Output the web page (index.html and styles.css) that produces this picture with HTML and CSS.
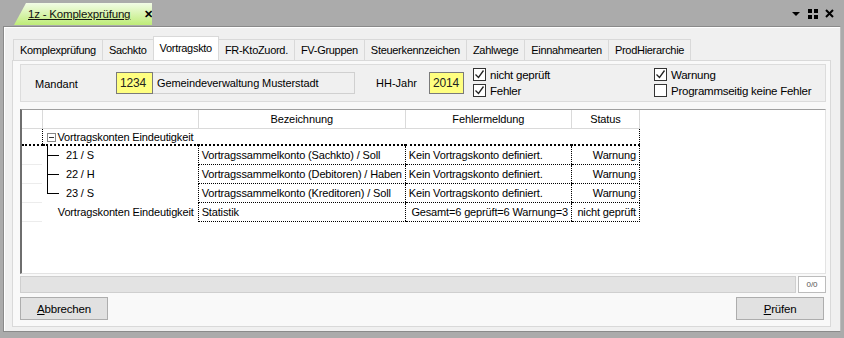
FILE: index.html
```html
<!DOCTYPE html>
<html lang="de">
<head>
<meta charset="utf-8">
<link rel="stylesheet" href="styles.css">
</head>
<body>
<div class="topbar">
  <div class="doctab"><span class="doctitle">1z - Komplexprüfung</span><span class="docclose">✕</span></div>
  <div class="topicons">
    <svg width="10" height="6" viewBox="0 0 10 6"><path d="M1 1h8L5 5z" fill="#000"/></svg>
    <svg width="10" height="10" viewBox="0 0 10 10"><rect x="0" y="0" width="4" height="4"/><rect x="6" y="0" width="4" height="4"/><rect x="0" y="6" width="4" height="4"/><rect x="6" y="6" width="4" height="4"/></svg>
    <svg width="9" height="9" viewBox="0 0 9 9"><path d="M1 1l7 7M8 1l-7 7" stroke="#000" stroke-width="2"/></svg>
  </div>
</div>
<div class="window">
  <div class="tabs">
    <div class="tab">Komplexprüfung</div>
    <div class="tab">Sachkto</div>
    <div class="tab active">Vortragskto</div>
    <div class="tab">FR-KtoZuord.</div>
    <div class="tab">FV-Gruppen</div>
    <div class="tab">Steuerkennzeichen</div>
    <div class="tab">Zahlwege</div>
    <div class="tab">Einnahmearten</div>
    <div class="tab">ProdHierarchie</div>
  </div>
  <div class="page">
    <div class="filter">
      <span class="lbl-mandant">Mandant</span>
      <span class="inp yellow w-mand">1234</span>
      <span class="inp grayf w-name">Gemeindeverwaltung Musterstadt</span>
      <span class="lbl-jahr">HH-Jahr</span>
      <span class="inp yellow w-jahr">2014</span>
      <div class="checks">
        <label class="cb"><span class="box"><svg width="11" height="11" viewBox="0 0 11 11"><path d="M1.5 5.5l3 3 5-7" stroke="#222" stroke-width="1.3" fill="none"/></svg></span>nicht geprüft</label>
        <label class="cb"><span class="box"><svg width="11" height="11" viewBox="0 0 11 11"><path d="M1.5 5.5l3 3 5-7" stroke="#222" stroke-width="1.3" fill="none"/></svg></span>Fehler</label>
      </div>
      <div class="checks checks2">
        <label class="cb"><span class="box"><svg width="11" height="11" viewBox="0 0 11 11"><path d="M1.5 5.5l3 3 5-7" stroke="#222" stroke-width="1.3" fill="none"/></svg></span>Warnung</label>
        <label class="cb"><span class="box"></span>Programmseitig keine Fehler</label>
      </div>
    </div>
    <div class="grid">
      <table>
        <colgroup><col class="c0"><col class="c1"><col class="c2"><col class="c3"><col class="c4"></colgroup>
        <thead>
          <tr><th class="rh"></th><th></th><th>Bezeichnung</th><th>Fehlermeldung</th><th>Status</th></tr>
        </thead>
        <tbody>
          <tr class="grp"><td class="rh"></td><td colspan="4" class="grpcell"><span class="minus"></span>Vortragskonten Eindeutigkeit</td></tr>
          <tr class="first"><td class="rh"></td><td class="tree"><span class="vl"></span><span class="hl"></span>21 / S</td><td class="d">Vortragssammelkonto (Sachkto) / Soll</td><td class="d">Kein Vortragskonto definiert.</td><td class="d r">Warnung</td></tr>
          <tr><td class="rh"></td><td class="tree"><span class="vl"></span><span class="hl"></span>22 / H</td><td class="d">Vortragssammelkonto (Debitoren) / Haben</td><td class="d">Kein Vortragskonto definiert.</td><td class="d r">Warnung</td></tr>
          <tr><td class="rh"></td><td class="tree"><span class="vl last"></span><span class="hl"></span>23 / S</td><td class="d">Vortragssammelkonto (Kreditoren) / Soll</td><td class="d">Kein Vortragskonto definiert.</td><td class="d r">Warnung</td></tr>
          <tr class="lastrow"><td class="rh"></td><td class="r plain">Vortragskonten Eindeutigkeit</td><td class="d">Statistik</td><td class="d r">Gesamt=6 geprüft=6 Warnung=3</td><td class="d r">nicht geprüft</td></tr>
        </tbody>
      </table>
    </div>
    <div class="status">
      <div class="statusbar"></div>
      <div class="count">0/0</div>
    </div>
    <div class="buttons">
      <button class="btn"><u>A</u>bbrechen</button>
      <button class="btn"><u>P</u>rüfen</button>
    </div>
  </div>
</div>
</body>
</html>
```
FILE: styles.css
```css
html, body { margin: 0; padding: 0; }
body {
  width: 844px; height: 338px; overflow: hidden;
  background: #ababab;
  font-family: "Liberation Sans", Arial, sans-serif;
  font-size: 11px; color: #000;
}
.topbar { height: 25px; display: flex; align-items: flex-end; justify-content: space-between; }
.doctab {
  margin-left: 14px; height: 22px; width: 138px; flex-shrink: 0;
  background: linear-gradient(#f2fce6, #bfec78);
  clip-path: polygon(12px 0, 100% 0, 100% 100%, 0 100%);
  display: flex; align-items: center; box-sizing: border-box; padding-left: 14px;
  white-space: nowrap;
}
.doctitle { text-decoration: underline; font-size: 11.5px; letter-spacing: -0.2px; color: #111; }
.docclose { margin-left: 14px; font-weight: bold; font-size: 11px; }
.topicons { display: flex; align-items: center; gap: 7px; margin-right: 10px; align-self: center; margin-top: 2px; }
.window {
  margin: 1px 3px 0 3px; height: 306px;
  background: #f0f0f0; border: 1px solid #8a8a8a; border-right-color: #bdbdbd;
  box-shadow: inset 1px 1px 0 #fff;
  box-sizing: border-box; padding: 9px 9px 0 8px;
}
.tabs { display: flex; height: 24px; align-items: flex-end; padding-left: 1px; }
.tab {
  height: 21px; box-sizing: border-box; padding: 4px 6px 0 6px;
  border: 1px solid #d9d9d9; border-bottom: none; border-right: none;
  background: #f0f0f0; letter-spacing: -0.3px; font-size: 11px; white-space: nowrap;
}
.tab:last-child { border-right: 1px solid #d9d9d9; }
.tab.active { height: 24px; background: #fff; padding-top: 5px; border-color: #d9d9d9; border-right: 1px solid #d9d9d9; }
.tab.active + .tab { border-left: none; }
.page {
  height: 267px; box-sizing: border-box;
  border: 1px solid #d9d9d9; background: #f9f9f9;
  padding: 3px 4px 0 7px;
}
.filter {
  height: 38px; box-sizing: border-box; border: 1px solid #dcdcdc;
  background: #f0f0f0; display: flex; align-items: center; white-space: nowrap;
}
.filter > * { flex-shrink: 0; }
.lbl-mandant { margin-left: 14px; width: 81px; margin-top: 1px; }
.inp { height: 22px; box-sizing: border-box; border: 1px solid #7a7a7a; display: flex; align-items: center; padding-left: 3px; font-size: 12px; letter-spacing: -0.2px; }
.yellow { background: #ffff80; color: #222; }
.w-mand { width: 37px; }
.grayf { background: #f0f0f0; border-color: #d0d0d0; border-left: none; width: 202px; padding-left: 4px; font-size: 11px; letter-spacing: -0.1px; }
.lbl-jahr { margin-left: 21px; width: 53px; font-size: 11px; }
.w-jahr { width: 35px; }
.checks { display: flex; flex-direction: column; margin-left: 9px; gap: 3px; margin-top: -1px; }
.checks2 { margin-left: 104px; }
.cb { display: flex; align-items: center; height: 13px; font-size: 11.5px; letter-spacing: -0.25px; white-space: nowrap; }
.box { width: 11px; height: 11px; border: 1px solid #333; background: #fff; margin-right: 4px; display: inline-flex; flex-shrink: 0; }
.grid {
  margin-top: 7px; height: 165px; box-sizing: border-box;
  background: #fff; border: 1px solid #a0a0a0; border-right-color: #e3e3e3; border-bottom-color: #e3e3e3;
  border-left: 2px solid #6e6e6e;
}
table { border-collapse: collapse; table-layout: fixed; width: 618px; }
col.c0 { width: 20px; } col.c1 { width: 156px; } col.c2 { width: 207px; } col.c3 { width: 166px; } col.c4 { width: 68px; }
th { height: 18px; font-weight: normal; border-right: 1px solid #dadada; border-bottom: 1px solid #dadada; padding: 0; font-size: 11px; letter-spacing: -0.1px; background: #fff; }
td { height: 18px; padding: 0 3px; white-space: nowrap; overflow: hidden; font-size: 11px; letter-spacing: -0.15px; }
td.rh { padding: 0; border-bottom: 1px solid #ececec; }
tr.grp td.grpcell { border: 1px dotted #000; border-bottom: 2px dotted #000; padding-left: 4px; height: 15px; }
tr.grp td.rh { border-top: 1px dotted #000; border-bottom: 2px dotted #000; height: 15px; }
.minus { display: inline-block; width: 7px; height: 7px; border: 1px solid #888; margin-right: 2px; vertical-align: -1px; position: relative; background: #fff; }
.minus::after { content: ""; position: absolute; left: 1px; top: 3px; width: 5px; height: 1px; background: #333; }
td.d { border-left: 1px dotted #000; border-bottom: 1px dotted #000; }
td.d:last-child { border-right: 1px dotted #000; }
td.r { text-align: right; }
td.tree { position: relative; padding-left: 24px; }
.vl { position: absolute; left: 5px; top: 0; bottom: 0; width: 1px; background: #000; }
.vl.last { bottom: 9px; }
.hl { position: absolute; left: 5px; top: 9px; width: 12px; height: 1px; background: #000; }
tr.lastrow td.plain { padding-right: 4px; }
.status { display: flex; margin-top: 2px; height: 17px; gap: 2px; }
.statusbar { flex: 1; background: #e3e3e3; border: 1px solid #cfcfcf; }
.count { width: 28px; box-sizing: border-box; border: 1px solid #bcbcbc; background: #fff; font-size: 8px; color: #555; display: flex; align-items: center; justify-content: center; }
.buttons { display: flex; justify-content: space-between; margin-top: 4px; padding-right: 2px; }
.btn {
  width: 88px; height: 23px; background: #e1e1e1; border: 1px solid #adadad;
  font-family: "Liberation Sans", Arial, sans-serif; font-size: 11.5px; letter-spacing: -0.2px; padding: 0; color: #000;
}
```
